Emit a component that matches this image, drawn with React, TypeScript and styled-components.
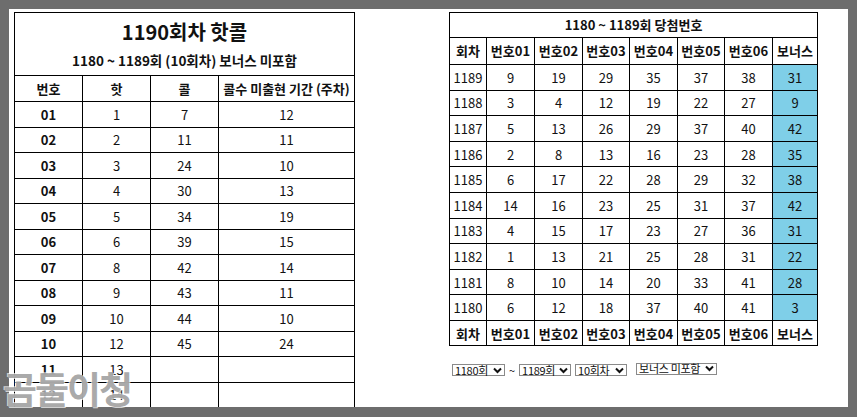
import React from "react";
import styled, { createGlobalStyle } from "styled-components";

const GlobalStyle = createGlobalStyle`
  html, body { margin: 0; padding: 0; background: #fff; }
  body { font-family: "Noto Sans CJK KR", "Noto Sans", sans-serif; }
`;

const Frame = styled.div`
  position: relative;
  width: 857px;
  height: 417px;
  box-sizing: border-box;
  background: #6d6d6d;
  padding: 9px 9px 10px 9px;
  overflow: hidden;
`;

const Panel = styled.div`
  height: 100%;
  background: #fff;
  overflow: hidden;
  display: flex;
  align-items: flex-start;
  gap: 94px;
  padding: 3px 0 0 5px;
  box-sizing: border-box;
`;

const Table = styled.table<{ $w: number }>`
  width: ${(p) => p.$w}px;
  border-collapse: collapse;
  table-layout: fixed;
  color: #111;
  font-size: 13px;
  flex: none;
`;

const Cell = styled.td<{ $bold?: boolean; $bonus?: boolean }>`
  border: 1px solid #000;
  padding: 0;
  text-align: center;
  vertical-align: middle;
  white-space: nowrap;
  font-weight: ${(p) => (p.$bold ? 700 : 400)};
  background: ${(p) => (p.$bonus ? "#7fcfe8" : "transparent")};
  line-height: 1;
`;

const Row = styled.tr<{ $h: number }>`
  height: ${(p) => p.$h}px;
`;

const TitleCell = styled.td`
  border: 1px solid #000;
  padding: 0;
  text-align: center;
  vertical-align: top;
`;

const BigTitle = styled.div`
  font-size: 20px;
  font-weight: 700;
  line-height: 1;
  padding-top: 9px;
`;

const SubTitle = styled.div`
  font-size: 13.5px;
  font-weight: 700;
  line-height: 1;
  padding-top: 12px;
`;

const RightCol = styled.div`
  display: flex;
  flex-direction: column;
  gap: 16px;
`;

const Controls = styled.div`
  display: flex;
  align-items: center;
  padding-left: 3px;
  font-size: 11px;
  color: #111;
`;

const Select = styled.div<{ $w: number; $ml?: number; $up?: boolean }>`
  width: ${(p) => p.$w}px;
  height: 12px;
  box-sizing: border-box;
  border: 1px solid #8a8a8a;
  display: flex;
  align-items: center;
  justify-content: space-between;
  padding: 0 2px 0 2px;
  margin-left: ${(p) => p.$ml ?? 0}px;
  margin-top: ${(p) => (p.$up ? -3 : 0)}px;
  font-size: 11px;
  line-height: 1;
  letter-spacing: -0.3px;
`;

const Tilde = styled.span`
  margin: 0 4px;
  font-size: 11px;
`;

const Watermark = styled.div`
  position: absolute;
  left: 3px;
  top: 368px;
  font-size: 37px;
  font-weight: 700;
  line-height: 1.1;
  letter-spacing: -2px;
  color: rgba(155, 155, 155, 0.85);
  text-shadow: 1px 1px 0 rgba(255, 255, 255, 0.7), -1px -1px 0 rgba(255, 255, 255, 0.7);
  pointer-events: none;
`;

const Chevron = () => (
  <svg width="9" height="7" viewBox="0 0 9 7">
    <path d="M1 1.5 L4.5 5 L8 1.5" fill="none" stroke="#111" strokeWidth="2" />
  </svg>
);

const hot = [
  ["01", "1", "7", "12"],
  ["02", "2", "11", "11"],
  ["03", "3", "24", "10"],
  ["04", "4", "30", "13"],
  ["05", "5", "34", "19"],
  ["06", "6", "39", "15"],
  ["07", "8", "42", "14"],
  ["08", "9", "43", "11"],
  ["09", "10", "44", "10"],
  ["10", "12", "45", "24"],
  ["11", "13", "", ""],
  ["12", "14", "", ""],
];

const draws = [
  ["1189", "9", "19", "29", "35", "37", "38", "31"],
  ["1188", "3", "4", "12", "19", "22", "27", "9"],
  ["1187", "5", "13", "26", "29", "37", "40", "42"],
  ["1186", "2", "8", "13", "16", "23", "28", "35"],
  ["1185", "6", "17", "22", "28", "29", "32", "38"],
  ["1184", "14", "16", "23", "25", "31", "37", "42"],
  ["1183", "4", "15", "17", "23", "27", "36", "31"],
  ["1182", "1", "13", "21", "25", "28", "31", "22"],
  ["1181", "8", "10", "14", "20", "33", "41", "28"],
  ["1180", "6", "12", "18", "37", "40", "41", "3"],
];

const heads = ["회차", "번호01", "번호02", "번호03", "번호04", "번호05", "번호06", "보너스"];
const rightCols = [37, 48, 48, 47, 48, 47, 48, 45];

export default function App() {
  return (
    <>
      <GlobalStyle />
      <Frame>
        <Panel>
          <Table $w={340}>
            <colgroup>
              <col style={{ width: 68 }} />
              <col style={{ width: 68 }} />
              <col style={{ width: 68 }} />
              <col style={{ width: 136 }} />
            </colgroup>
            <tbody>
              <Row $h={63}>
                <TitleCell colSpan={4}>
                  <BigTitle>1190회차 핫콜</BigTitle>
                  <SubTitle>1180 ~ 1189회 (10회차) 보너스 미포함</SubTitle>
                </TitleCell>
              </Row>
              <Row $h={26}>
                <Cell $bold>번호</Cell>
                <Cell $bold>핫</Cell>
                <Cell $bold>콜</Cell>
                <Cell $bold>콜수 미출현 기간 (주차)</Cell>
              </Row>
              {hot.map((r) => (
                <Row $h={25.5} key={r[0]}>
                  <Cell $bold>{r[0]}</Cell>
                  <Cell>{r[1]}</Cell>
                  <Cell>{r[2]}</Cell>
                  <Cell>{r[3]}</Cell>
                </Row>
              ))}
            </tbody>
          </Table>
          <RightCol>
            <Table $w={368}>
              <colgroup>
                {rightCols.map((w, i) => (
                  <col key={i} style={{ width: w }} />
                ))}
              </colgroup>
              <tbody>
                <Row $h={24.7}>
                  <Cell $bold colSpan={8}>
                    1180 ~ 1189회 당첨번호
                  </Cell>
                </Row>
                <Row $h={27.3}>
                  {heads.map((h) => (
                    <Cell $bold key={h}>
                      {h}
                    </Cell>
                  ))}
                </Row>
                {draws.map((r) => (
                  <Row $h={25.6} key={r[0]}>
                    {r.map((v, i) => (
                      <Cell key={i} $bonus={i === 7}>
                        {v}
                      </Cell>
                    ))}
                  </Row>
                ))}
                <Row $h={25.3}>
                  {heads.map((h) => (
                    <Cell $bold key={h}>
                      {h}
                    </Cell>
                  ))}
                </Row>
              </tbody>
            </Table>
            <Controls>
              <Select $w={53}>
                1180회 <Chevron />
              </Select>
              <Tilde>~</Tilde>
              <Select $w={52}>
                1189회 <Chevron />
              </Select>
              <Select $w={52} $ml={4}>
                10회차 <Chevron />
              </Select>
              <Select $w={81} $ml={9} $up>
                보너스 미포함 <Chevron />
              </Select>
            </Controls>
          </RightCol>
        </Panel>
        <Watermark>곰돌이청</Watermark>
      </Frame>
    </>
  );
}
